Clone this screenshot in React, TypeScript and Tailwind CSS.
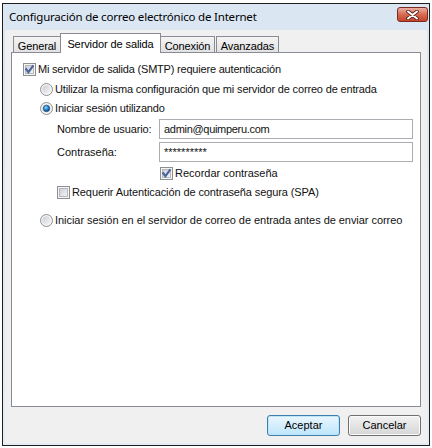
import React from "react";

const body = { fontFamily: '"Liberation Sans", Arial, sans-serif' };

function Check({ checked = false }: { checked?: boolean }) {
  return (
    <svg width="13" height="13" viewBox="0 0 13 13" className="shrink-0">
      <defs>
        <linearGradient id="cbg" x1="0" y1="0" x2="1" y2="1">
          <stop offset="0" stopColor="#c9ccd2" />
          <stop offset="1" stopColor="#f6f6f6" />
        </linearGradient>
      </defs>
      <rect x="0.5" y="0.5" width="12" height="12" fill="#f5f5f5" stroke="#8e8f8f" />
      <rect x="2.5" y="2.5" width="8" height="8" fill="url(#cbg)" stroke="#b4b8bd" />
      {checked && (
        <path d="M3.2 6.2 L5.4 9.2 L9.8 3.2" stroke="#4a64a0" strokeWidth="2.1" fill="none" strokeLinecap="square" />
      )}
    </svg>
  );
}

function Radio({ checked = false }: { checked?: boolean }) {
  return (
    <svg width="13" height="13" viewBox="0 0 13 13" className="shrink-0">
      <defs>
        <linearGradient id="rbg" x1="0" y1="0" x2="1" y2="1">
          <stop offset="0" stopColor="#c9ccd2" />
          <stop offset="1" stopColor="#f8f8f8" />
        </linearGradient>
        <radialGradient id="rsel" cx="0.4" cy="0.35" r="0.7">
          <stop offset="0" stopColor="#9be1ff" />
          <stop offset="0.45" stopColor="#2a8ad4" />
          <stop offset="1" stopColor="#0d3b7c" />
        </radialGradient>
      </defs>
      <circle cx="6.5" cy="6.5" r="6" fill="#f4f4f4" stroke="#8e8f8f" />
      <circle cx="6.5" cy="6.5" r="4.3" fill="url(#rbg)" />
      {checked && <circle cx="6.5" cy="6.5" r="3.2" fill="url(#rsel)" stroke="#1c3f6e" strokeWidth="0.6" />}
    </svg>
  );
}

function CloseButton() {
  return (
    <div className="mt-[3px] w-[31px] h-[15px] rounded-[3px] border border-[#7a2a20] bg-gradient-to-b from-[#eab0a3] via-[#d66a52] to-[#c4452b] flex items-center justify-center">
      <svg width="13" height="10" viewBox="0 0 13 10">
        <path d="M2 1.5 L11 8.5 M11 1.5 L2 8.5" stroke="#5a2018" strokeWidth="3.6" strokeLinecap="round" />
        <path d="M2 1.5 L11 8.5 M11 1.5 L2 8.5" stroke="#ffffff" strokeWidth="2" strokeLinecap="round" />
      </svg>
    </div>
  );
}

function Tab({ label, w, active = false, cls = "" }: { label: string; w: string; active?: boolean; cls?: string }) {
  if (active) {
    return (
      <div className={`${w} ${cls} h-[20px] mb-[-1px] relative z-10 bg-white border border-b-0 border-[#898c95] flex items-start justify-center pt-[2px] text-[11px] text-black tracking-[-0.1px]`}>
        {label}
      </div>
    );
  }
  return (
    <div className={`${w} ${cls} h-[16px] bg-gradient-to-b from-[#f4f4f4] to-[#e2e2e2] border border-b-0 border-[#898c95] flex items-start justify-center pt-[1px] text-[11px] text-black tracking-[-0.1px]`}>
      {label}
    </div>
  );
}

export default function App() {
  return (
    <div className="w-[432px] h-[448px] bg-white overflow-hidden" style={body}>
      <div className="ml-[2px] mt-[3px] w-[428px] h-[443px] border border-[#1e1e1e] bg-gradient-to-b from-[#dbe6f3] to-[#e4ecf6] flex flex-col">
        <div className="h-[26px] shrink-0 flex items-start justify-between pl-[6px] pr-[1px]">
          <span className="mt-[4px] text-[11.5px] tracking-[-0.2px] text-black" style={{ fontFamily: '"Noto Sans", "Open Sans", sans-serif' }}>
            Configuración de correo electrónico de Internet
          </span>
          <CloseButton />
        </div>
        <div className="flex-1 mx-[2px] mb-[2px] bg-[#f0f0f0] flex flex-col px-[6px] pt-[3px]">
          <div className="h-[19px] shrink-0 flex items-end pl-[2px]">
            <Tab label="General" w="w-[48px]" />
            <Tab label="Servidor de salida" w="w-[101px]" active cls="ml-[-1px]" />
            <Tab label="Conexión" w="w-[55px]" cls="ml-[-1px]" />
            <Tab label="Avanzadas" w="w-[63px]" cls="ml-[1px]" />
          </div>
          <div className="h-[355px] shrink-0 bg-white border border-[#898c95] flex flex-col pt-[7px] text-[11px] text-[#111]">
            <div className="h-[18px] flex items-center pl-[11px] gap-[2px]">
              <Check checked />
              <span className="tracking-[-0.2px]">Mi servidor de salida (SMTP) requiere autenticación</span>
            </div>
            <div className="h-[18px] mt-[2px] flex items-center pl-[28px] gap-[2px]">
              <Radio />
              <span className="tracking-[-0.16px]">Utilizar la misma configuración que mi servidor de correo de entrada</span>
            </div>
            <div className="h-[18px] mt-[1px] flex items-center pl-[28px] gap-[2px]">
              <Radio checked />
              <span className="tracking-[-0.16px]">Iniciar sesión utilizando</span>
            </div>
            <div className="h-[20px] mt-[2px] flex items-center pl-[45px]">
              <span className="w-[102px] tracking-[-0.12px]">Nombre de usuario:</span>
              <div className="w-[254px] h-[20px] border border-[#abadb3] bg-white flex items-center pl-[4px] tracking-[-0.3px]">admin@quimperu.com</div>
            </div>
            <div className="h-[20px] mt-[3px] flex items-center pl-[45px]">
              <span className="w-[102px]">Contraseña:</span>
              <div className="w-[254px] h-[20px] border border-[#abadb3] bg-white flex items-center pl-[4px]">**********</div>
            </div>
            <div className="h-[18px] mt-[2px] flex items-center pl-[148px] gap-[2px]">
              <Check checked />
              <span>Recordar contraseña</span>
            </div>
            <div className="h-[18px] mt-[1px] flex items-center pl-[45px] gap-[2px]">
              <Check />
              <span className="tracking-[-0.1px]">Requerir Autenticación de contraseña segura (SPA)</span>
            </div>
            <div className="h-[18px] mt-[10px] flex items-center pl-[28px] gap-[2px]">
              <Radio />
              <span className="tracking-[-0.05px]">Iniciar sesión en el servidor de correo de entrada antes de enviar correo</span>
            </div>
          </div>
          <div className="mt-[8px] h-[21px] shrink-0 flex justify-end gap-[8px] text-[11px] text-black">
            <button className="w-[73px] h-[21px] rounded-[3px] border border-[#3c7fb1] bg-gradient-to-b from-[#eaf6fd] to-[#bee6fd] flex items-center justify-center shadow-[inset_0_0_0_1px_#c0e4f8]">
              Aceptar
            </button>
            <button className="w-[73px] h-[21px] rounded-[3px] border border-[#707070] bg-gradient-to-b from-[#f2f2f2] to-[#d6d6d6] flex items-center justify-center shadow-[inset_0_0_0_1px_#fafafa]">
              Cancelar
            </button>
          </div>
        </div>
      </div>
    </div>
  );
}
